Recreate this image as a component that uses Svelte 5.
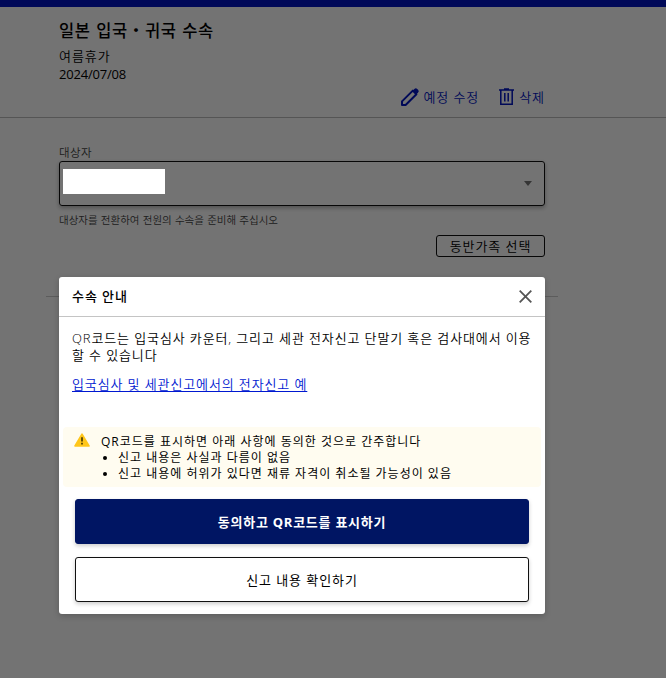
<script lang="ts">
	const conditions = ['신고 내용은 사실과 다름이 없음', '신고 내용에 허위가 있다면 재류 자격이 취소될 가능성이 있음'];

	let open = $state(true);
	const close = () => (open = false);
</script>

<div class="page">
	<header class="trip">
		<h1>일본 입국・귀국 수속</h1>
		<p class="trip-name">여름휴가</p>
		<p class="trip-date">2024/07/08</p>
		<div class="trip-actions">
			<a href="#edit">
				<svg width="20" height="20" viewBox="0 0 20 20">
					<path
						d="M2 14.4 12.8 3.6l3.6 3.6L5.6 18H2z"
						fill="none"
						stroke="currentColor"
						stroke-width="2"
						stroke-linejoin="round"
					/>
					<path
						d="m12.6 3.7 1.8-1.8a2 2 0 0 1 2.8 0l.9.9a2 2 0 0 1 0 2.8l-1.8 1.8z"
						fill="currentColor"
					/>
				</svg>
				예정 수정
			</a>
			<a class="delete" href="#delete">
				<svg width="15" height="18" viewBox="0 0 15 18">
					<path
						d="M0 2h15M5 1h5M1.8 2v14.2h11.4V2M5.8 5v8.5M9.2 5v8.5"
						fill="none"
						stroke="currentColor"
						stroke-width="1.5"
					/>
				</svg>
				삭제
			</a>
		</div>
	</header>

	<main>
		<div class="label">대상자</div>
		<div class="select">
			<span class="select-value"></span>
			<span class="caret"></span>
		</div>
		<p class="help">대상자를 전환하여 전원의 수속을 준비해 주십시오</p>
		<button class="family">동반가족 선택</button>
		<hr />
	</main>
</div>

{#if open}
	<div class="overlay">
		<div class="modal" role="dialog" aria-labelledby="modal-title">
			<div class="modal-head">
				<h2 id="modal-title">수속 안내</h2>
				<button class="close" aria-label="닫기" onclick={close}>
					<svg width="13" height="13" viewBox="0 0 13 13">
						<path d="m.7.7 11.6 11.6M12.3.7.7 12.3" stroke="#555" stroke-width="1.8" />
					</svg>
				</button>
			</div>
			<div class="modal-text">
				<p>QR코드는 입국심사 카운터, 그리고 세관 전자신고 단말기 혹은 검사대에서 이용<br />할 수 있습니다</p>
				<a href="#example">입국심사 및 세관신고에서의 전자신고 예</a>
			</div>
			<div class="notice">
				<svg width="16" height="14" viewBox="0 0 16 14">
					<path
						d="M8 1.2 15 13H1z"
						fill="#ffc61a"
						stroke="#ffc61a"
						stroke-width="1.6"
						stroke-linejoin="round"
					/>
					<path d="M8 4.2v4.4M8 9.8v1.6" stroke="#332800" stroke-width="1.5" />
				</svg>
				<div>
					<p>QR코드를 표시하면 아래 사항에 동의한 것으로 간주합니다</p>
					<ul>
						{#each conditions as condition}
							<li>{condition}</li>
						{/each}
					</ul>
				</div>
			</div>
			<div class="modal-actions">
				<button class="primary">동의하고 QR코드를 표시하기</button>
				<button>신고 내용 확인하기</button>
			</div>
		</div>
	</div>
{/if}

<style>
	:global(body) {
		background: #fff;
		overflow: hidden;
	}

	.page,
	.overlay {
		box-sizing: border-box;
		height: 678px;
		font-family: 'Open Sans', 'Noto Sans CJK KR', sans-serif;
		font-size: 13px;
		font-weight: 350;
		line-height: 18px;
		letter-spacing: 0.92px;
		color: #000;
	}

	h1,
	h2,
	p,
	ul {
		margin: 0;
		padding: 0;
	}

	button {
		box-sizing: border-box;
		padding: 0;
		border: 1px solid #111;
		border-radius: 3px;
		background: transparent;
		font: inherit;
		letter-spacing: inherit;
		color: inherit;
	}

	/* Trip summary */
	.page {
		border-top: 7px solid #0014c3;
	}

	.trip {
		box-sizing: border-box;
		height: 111px;
		padding: 12px 121px 0 59px;
		border-bottom: 1px solid #bcbcbc;
	}

	h1 {
		font-size: 16.5px;
		font-weight: 500;
		line-height: 24px;
		letter-spacing: 0.6px;
		word-spacing: 0.8px;
	}

	.trip-name {
		margin-top: 4px;
	}

	.trip-date {
		font-weight: 400;
		letter-spacing: -0.2px;
	}

	.trip-actions {
		display: flex;
		justify-content: flex-end;
		gap: 20px;
		margin-top: 4px;
	}

	.trip-actions a {
		display: flex;
		align-items: center;
		gap: 3px;
		height: 20px;
		color: #0014c3;
		text-decoration: none;
	}

	.trip-actions .delete {
		gap: 5px;
	}

	/* Applicant picker */
	main {
		display: flex;
		flex-direction: column;
		padding: 27px 121px 0 59px;
	}

	.label {
		height: 16px;
		font-size: 11.5px;
		line-height: 16px;
		letter-spacing: 0.46px;
		color: #444;
	}

	.select {
		box-sizing: border-box;
		display: flex;
		align-items: center;
		justify-content: space-between;
		height: 45px;
		padding: 0 12px 0 3px;
		border: 1px solid #111;
		border-radius: 3px;
		box-shadow: 0 2px 4px rgba(0, 0, 0, 0.3);
	}

	.select-value {
		position: relative;
		z-index: 2;
		width: 102px;
		height: 25px;
		margin-bottom: 4px;
		background: #fff;
	}

	.caret {
		border: 4.5px solid transparent;
		border-top: 5px solid #777;
		border-bottom: 0;
	}

	.help {
		margin-top: 5px;
		font-size: 10.5px;
		letter-spacing: 0;
		word-spacing: 0.5px;
		color: #444;
	}

	.family {
		align-self: flex-end;
		width: 109px;
		height: 22px;
		margin-top: 6px;
		line-height: 20px;
	}

	hr {
		width: 512px;
		margin: 39px -13px 0;
		border: 0;
		border-top: 1px solid #ccc;
	}

	/* Dialog */
	.overlay {
		position: absolute;
		inset: 0;
		z-index: 1;
		padding: 277px 121px 0 59px;
		background: rgba(0, 0, 0, 0.55);
	}

	.modal {
		box-sizing: border-box;
		height: 337px;
		border-radius: 3px;
		background: #fff;
		box-shadow: 0 2px 6px rgba(0, 0, 0, 0.2);
	}

	.modal-head {
		box-sizing: border-box;
		display: flex;
		align-items: center;
		justify-content: space-between;
		height: 40px;
		padding: 0 13px;
		border-bottom: 1px solid #c4c4c4;
	}

	h2 {
		margin-bottom: 2px;
		font-size: 13px;
		font-weight: 500;
		line-height: 20px;
	}

	.close {
		display: flex;
		border: 0;
	}

	.modal-text {
		height: 97px;
		padding: 13px 13px 0;
		line-height: 17px;
		letter-spacing: 0.88px;
		white-space: nowrap;
	}

	.modal-text a {
		display: inline-block;
		margin-top: 12px;
		color: #0018d0;
		text-underline-offset: 2px;
	}

	.notice {
		box-sizing: border-box;
		display: flex;
		gap: 11px;
		height: 60px;
		margin: 0 4px;
		padding: 7px 11px 5px;
		border-radius: 4px;
		background: #fffcf0;
		font-size: 12px;
		font-weight: 400;
		line-height: 16px;
		letter-spacing: 1px;
		white-space: nowrap;
	}

	.notice svg {
		margin-top: -1px;
	}

	ul {
		padding-left: 17px;
	}

	.modal-actions {
		display: grid;
		gap: 13px;
		padding: 12px 16px;
	}

	.modal-actions button {
		height: 45px;
		background: #fff;
		font-weight: 400;
		box-shadow: 0 2px 4px rgba(0, 0, 0, 0.2);
	}

	.modal-actions .primary {
		border-color: #001563;
		background: #001563;
		color: #fff;
		font-weight: 700;
		letter-spacing: 0.75px;
	}
</style>
